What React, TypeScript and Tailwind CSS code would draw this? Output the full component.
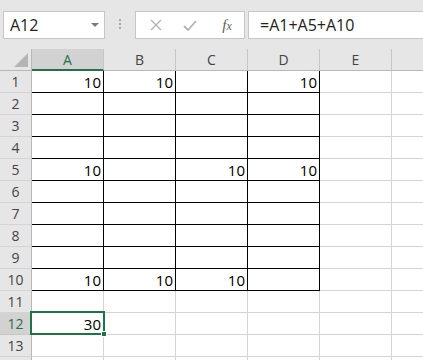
import React from "react";

const COLS = ["A", "B", "C", "D", "E", "F"];
const ROWS = 14;

// values by row (1-based) -> column index
const VALUES: Record<number, Record<number, string>> = {
  1: { 0: "10", 1: "10", 3: "10" },
  5: { 0: "10", 2: "10", 3: "10" },
  10: { 0: "10", 1: "10", 2: "10" },
  12: { 0: "30" },
};

function Toolbar() {
  return (
    <div className="flex h-[49px] items-start bg-[#e6e6e6] pt-[11px]">
      <div className="ml-[3px] flex h-[28px] w-[102px] items-center justify-between border border-[#c6c6c6] bg-white pl-[6px] pr-[5px]">
        <span className="text-[16px] leading-none text-[#222]">A12</span>
        <svg width="8" height="5" viewBox="0 0 8 5">
          <path d="M0 0 H8 L4 4 Z" fill="#7a7a7a" />
        </svg>
      </div>
      <div className="flex w-[30px] flex-col items-center gap-[2px] pt-[8px]">
        <span className="h-[2px] w-[2px] bg-[#a8a8a8]" />
        <span className="h-[2px] w-[2px] bg-[#a8a8a8]" />
        <span className="h-[2px] w-[2px] bg-[#a8a8a8]" />
      </div>
      <div className="flex h-[28px] w-[110px] items-center border border-[#c6c6c6] bg-white">
        <div className="flex w-[36px] justify-center pl-[4px]">
          <svg width="12" height="12" viewBox="0 0 12 12">
            <path d="M1 1 L11 11 M11 1 L1 11" stroke="#b4b4b4" strokeWidth="1.4" />
          </svg>
        </div>
        <div className="flex w-[36px] justify-center">
          <svg width="14" height="11" viewBox="0 0 14 11">
            <path d="M1 6 L5 10 L13 1" stroke="#b4b4b4" strokeWidth="1.8" fill="none" />
          </svg>
        </div>
        <div className="flex flex-1 justify-center pl-[2px]">
          <span className="font-['Liberation_Serif',serif] text-[15px] italic leading-none text-[#606060]">
            f<span className="text-[12px]">x</span>
          </span>
        </div>
      </div>
      <div className="ml-[3px] flex h-[28px] flex-1 items-center border-y border-l border-[#c6c6c6] bg-white pl-[11px]">
        <span className="text-[16px] leading-none text-[#222]">=A1+A5+A10</span>
      </div>
    </div>
  );
}

function HeaderRow() {
  return (
    <div className="flex h-[22px]">
      <div className="relative h-[22px] w-[32px] shrink-0 border-r border-b border-[#b8b8b8] bg-[#e6e6e6]">
        <svg className="absolute right-[3px] bottom-[3px]" width="14" height="14" viewBox="0 0 14 14">
          <path d="M14 0 V14 H0 Z" fill="#b5b5b5" />
        </svg>
      </div>
      {COLS.map((c, i) => (
        <div
          key={c}
          className={
            i === 0
              ? "flex h-[22px] w-[72px] shrink-0 items-center justify-center border-r border-b-2 border-r-[#c6c6c6] border-b-[#217346] bg-[#d2d2d2] text-[14px] text-[#217346]"
              : "flex h-[22px] w-[72px] shrink-0 items-center justify-center border-r border-b border-r-[#c6c6c6] border-b-[#b8b8b8] bg-[#e6e6e6] text-[14px] text-[#444]"
          }
        >
          {/* F sits mostly off-screen, its letter isn't visible */}
          {c === "F" ? "" : c}
        </div>
      ))}
    </div>
  );
}

function Row({ r }: { r: number }) {
  const selected = r === 12;
  return (
    <div className="flex h-[22px]">
      <div
        className={
          selected
            ? "flex h-[22px] w-[32px] shrink-0 items-center justify-center border-r border-b border-r-[#217346] border-b-[#c6c6c6] bg-[#d2d2d2] text-[14px] text-[#217346]"
            : "flex h-[22px] w-[32px] shrink-0 items-center justify-center border-r border-b border-r-[#b8b8b8] border-b-[#d4d4d4] bg-[#e6e6e6] text-[14px] text-[#444]"
        }
      >
        {r < ROWS ? r : ""}
      </div>
      {COLS.map((c, i) => {
        const boxed = r <= 10 && i <= 3;
        return (
          <div
            key={c}
            className={
              boxed
                ? "flex h-[22px] w-[72px] shrink-0 items-center justify-end border-r border-b border-black pr-[2px] text-[15px] leading-[20px] text-black"
                : "flex h-[22px] w-[72px] shrink-0 items-center justify-end border-r border-b border-[#d4d4d4] pr-[2px] text-[15px] leading-[20px] text-black"
            }
          >
            {VALUES[r]?.[i] ?? ""}
          </div>
        );
      })}
    </div>
  );
}

export default function App() {
  return (
    <div className="h-[360px] w-[423px] overflow-hidden bg-white font-['Open_Sans',sans-serif]">
      <Toolbar />
      <div className="relative">
        <HeaderRow />
        {Array.from({ length: ROWS }, (_, i) => (
          <Row key={i} r={i + 1} />
        ))}
        {/* active cell A12 */}
        <div className="pointer-events-none absolute top-[262px] left-[30px] h-[24px] w-[75px] border-2 border-[#217346]">
          <div className="absolute right-[-4px] bottom-[-4px] h-[6px] w-[6px] border border-white bg-[#217346]" />
        </div>
      </div>
    </div>
  );
}
